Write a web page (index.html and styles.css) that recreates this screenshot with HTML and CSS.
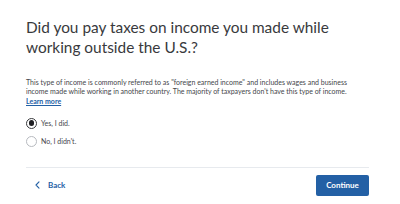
FILE: index.html
```html
<!DOCTYPE html>
<html lang="en">
<head>
<meta charset="utf-8">
<link rel="stylesheet" href="styles.css">
</head>
<body>
<main class="page">
  <h1 class="title">Did you pay taxes on income you made while working outside the U.S.?</h1>
  <p class="desc">This type of income is commonly referred to as "foreign earned income" and includes wages and business income made while working in another country. The majority of taxpayers don't have this type of income. <br><a class="link" href="#">Learn more</a></p>
  <div class="options">
    <label class="option"><span class="radio checked"></span><span class="label">Yes, I did.</span></label>
    <label class="option"><span class="radio"></span><span class="label">No, I didn't.</span></label>
  </div>
  <div class="footer">
    <a class="back" href="#"><svg class="chev" width="5" height="8" viewBox="0 0 5 8"><path d="M4 0.8 L1 4 L4 7.2" fill="none" stroke="#2360a5" stroke-width="1.1" stroke-linecap="round" stroke-linejoin="round"/></svg><span>Back</span></a>
    <button class="continue">Continue</button>
  </div>
</main>
</body>
</html>
```
FILE: styles.css
```css
* { box-sizing: border-box; }
html, body { margin: 0; padding: 0; background: #fff; }
body { font-family: "Lato", "Open Sans", sans-serif; color: #393a3d; }
.page { width: 400px; padding: 18px 31px 0 26px; }
.title { margin: 0; font-size: 15.4px; line-height: 19.5px; font-weight: 400; color: #393a3d; }
.desc { margin: 21px 0 0; font-size: 7px; line-height: 9.3px; color: #45464a; }
.link { color: #2360a5; font-weight: 700; text-decoration: underline; }
.options { margin-top: 12px; display: flex; flex-direction: column; gap: 7px; }
.option { display: flex; align-items: center; gap: 4px; font-size: 7px; color: #45464a; }
.radio { width: 11px; height: 11px; border-radius: 50%; border: 1px solid #b7babf; background: #fff; display: inline-block; position: relative; }
.radio.checked { border: 1.2px solid #393a3d; }
.radio.checked::after { content: ""; position: absolute; left: 1.6px; top: 1.6px; width: 5.4px; height: 5.4px; border-radius: 50%; background: #1f2023; }
.footer { margin-top: 20px; border-top: 1px solid #e7eaee; padding-top: 7px; display: flex; justify-content: space-between; align-items: center; }
.back { display: flex; align-items: center; gap: 8px; padding-left: 9px; color: #2360a5; font-weight: 700; font-size: 8px; text-decoration: none; }
.continue { width: 53px; height: 21px; border: none; border-radius: 2px; background: #2360a5; color: #fff; font-family: inherit; font-weight: 700; font-size: 8px; padding: 0; }
```
